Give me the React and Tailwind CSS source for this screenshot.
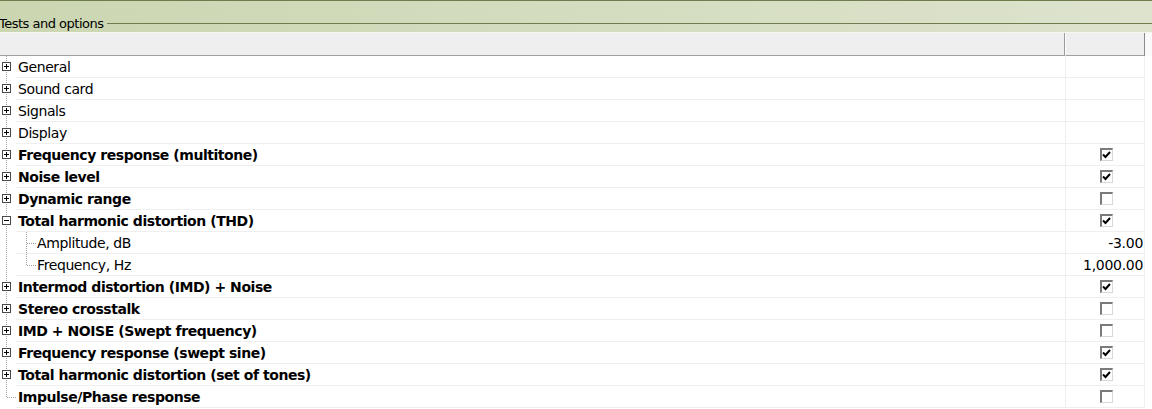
import React from "react";

const rows = [
  { label: "General", bold: false, type: "plus" },
  { label: "Sound card", bold: false, type: "plus" },
  { label: "Signals", bold: false, type: "plus" },
  { label: "Display", bold: false, type: "plus" },
  { label: "Frequency response (multitone)", bold: true, type: "plus", check: true },
  { label: "Noise level", bold: true, type: "plus", check: true },
  { label: "Dynamic range", bold: true, type: "plus", check: false },
  { label: "Total harmonic distortion (THD)", bold: true, type: "minus", check: true },
  { label: "Amplitude, dB", bold: false, type: "child", value: "-3.00" },
  { label: "Frequency, Hz", bold: false, type: "childLast", value: "1,000.00" },
  { label: "Intermod distortion (IMD) + Noise", bold: true, type: "plus", check: true },
  { label: "Stereo crosstalk", bold: true, type: "plus", check: false },
  { label: "IMD + NOISE (Swept frequency)", bold: true, type: "plus", check: false },
  { label: "Frequency response (swept sine)", bold: true, type: "plus", check: true },
  { label: "Total harmonic distortion (set of tones)", bold: true, type: "plus", check: true },
  { label: "Impulse/Phase response", bold: true, type: "last", check: false },
];

function Gutter({ type }) {
  const isLast = type === "last";
  return (
    <svg width="16" height="22" className="shrink-0 block">
      <line
        x1="6.5"
        y1="0"
        x2="6.5"
        y2={isLast ? 11 : 22}
        stroke="#a0a0a0"
        strokeDasharray="1 1"
      />
      {(type === "plus" || type === "minus") && (
        <g>
          <rect x="2.5" y="6.5" width="8" height="8" fill="#fff" stroke="#4a4a4a" />
          <line x1="4" y1="10.5" x2="9" y2="10.5" stroke="#000" />
          {type === "plus" && <line x1="6.5" y1="8" x2="6.5" y2="13" stroke="#000" />}
        </g>
      )}
      {isLast && <line x1="7" y1="11.5" x2="16" y2="11.5" stroke="#a0a0a0" strokeDasharray="1 1" />}
    </svg>
  );
}

function ChildTree({ last }) {
  return (
    <svg width="20" height="22" className="shrink-0 block">
      <line x1="10.5" y1="0" x2="10.5" y2={last ? 11 : 22} stroke="#a0a0a0" strokeDasharray="1 1" />
      <line x1="11" y1="11.5" x2="20" y2="11.5" stroke="#a0a0a0" strokeDasharray="1 1" />
    </svg>
  );
}

function Check({ checked }) {
  return (
    <div className="w-[13px] h-[13px] border-t-2 border-l-2 border-t-[#7a7a7a] border-l-[#7a7a7a] border-r border-b border-r-[#d8d8d8] border-b-[#d8d8d8] bg-white flex items-center justify-center">
      {checked && (
        <svg width="9" height="8" viewBox="0 0 9 8" className="block">
          <path d="M1 3.5 L3.5 6 L8 1" fill="none" stroke="#000" strokeWidth="2" />
        </svg>
      )}
    </div>
  );
}

export default function App() {
  return (
    <div
      className="w-[1152px] h-[409px] overflow-hidden bg-white text-[#000] relative"
      style={{ fontFamily: "Tahoma, 'DejaVu Sans', Verdana, sans-serif" }}
    >
      {/* Title band */}
      <div className="h-[32px] border-t border-t-[#6e7d4e] bg-gradient-to-r from-[#cbd6b1] to-[#dde3cd] flex items-center">
        <div className="flex items-center w-full mt-[13px]">
          <span className="text-[13px] leading-none ml-[-1px] pr-[4px] tracking-[-0.5px]">Tests and options</span>
          <div className="flex-1 h-px bg-[#6e7d4e]" />
        </div>
      </div>
      <div className="h-px bg-[#f7f7f0]" />
      {/* Column header */}
      <div className="flex h-[23px]">
        <div className="w-[1065px] bg-[#efefef] border-b border-b-[#a0a0a0] border-r border-r-[#9a9a9a]" />
        <div className="w-[80px] bg-[#efefef] border-b border-b-[#a0a0a0] border-r border-r-[#8a8a8a] border-l border-l-white" />
        <div className="flex-1 bg-[#fafafa]" />
      </div>
      {/* Rows */}
      <div className="flex flex-col">
        {rows.map((r, i) => {
          const child = r.type === "child" || r.type === "childLast";
          return (
            <div key={i} className="flex h-[22px]">
              <Gutter type={child ? "plain" : r.type} />
              <div className="flex w-[1129px] border-b border-b-[#efefef]">
                <div className="flex flex-1 items-center">
                  {child && <ChildTree last={r.type === "childLast"} />}
                  <span
                    className={
                      "text-[14px] leading-none whitespace-nowrap " +
                      (child ? "ml-[1px] " : "ml-[2px] ") +
                      (r.bold ? "font-bold tracking-[-0.45px]" : "tracking-[-0.4px]")
                    }
                  >
                    {r.label}
                  </span>
                </div>
                <div className="w-[80px] border-l border-l-[#efefef] border-r border-r-[#efefef] flex items-center justify-center">
                  {r.value ? (
                    <span className="w-full text-right pr-[1px] text-[14px] leading-none tracking-[-0.3px]">{r.value}</span>
                  ) : r.check !== undefined ? (
                    <div className="ml-[2px]">
                      <Check checked={r.check} />
                    </div>
                  ) : null}
                </div>
              </div>
            </div>
          );
        })}
      </div>
    </div>
  );
}
